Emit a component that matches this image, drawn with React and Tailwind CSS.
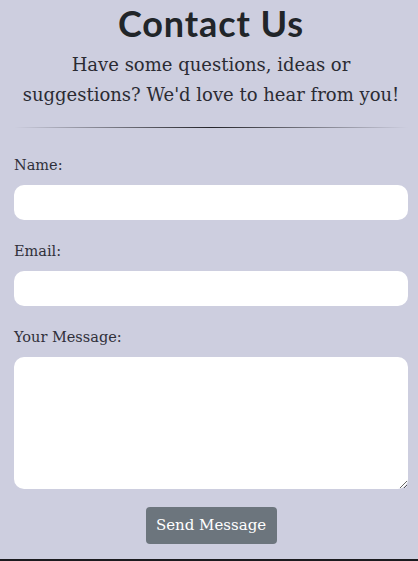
export default function App() {
  return (
    <main className="min-h-[561px] bg-[#cdcedf] border-b-2 border-[#1b1b1f] text-[#212529] font-['DejaVu_Serif',serif]">
      <div className="pl-[14px] pr-[10px] pt-[2px]">
        {/* Header */}
        <h1 className="text-center text-[36px] leading-[42px] font-bold font-['Lato',sans-serif] tracking-wide">
          Contact Us
        </h1>
        <p className="mt-[6px] text-center text-[18px] leading-[30px] text-[#2b2b33]">
          Have some questions, ideas or
          <br />
          suggestions? We'd love to hear from you!
        </p>
        <hr className="mt-[17px] h-px border-0 bg-gradient-to-r from-transparent via-[#25252b] to-transparent" />

        {/* Form */}
        <form className="mt-[26px] flex flex-col">
          <label className="text-[14.5px] leading-[22px] text-[#30303a]">Name:</label>
          <input type="text" className="mt-[9px] h-[35px] w-full rounded-[10px] bg-white px-3 outline-none" />

          <label className="mt-[20px] text-[14.5px] leading-[22px] text-[#30303a]">Email:</label>
          <input type="email" className="mt-[9px] h-[35px] w-full rounded-[10px] bg-white px-3 outline-none" />

          <label className="mt-[20px] text-[14.5px] leading-[22px] text-[#30303a]">Your Message:</label>
          <textarea className="mt-[9px] h-[132px] w-full rounded-[10px] bg-white px-3 py-2 outline-none" />

          <div className="mt-[18px] flex justify-center">
            <button type="button" className="h-[37px] w-[131px] rounded-[4px] bg-[#6c757d] text-[15px] text-white">
              Send Message
            </button>
          </div>
        </form>
      </div>
    </main>
  );
}
